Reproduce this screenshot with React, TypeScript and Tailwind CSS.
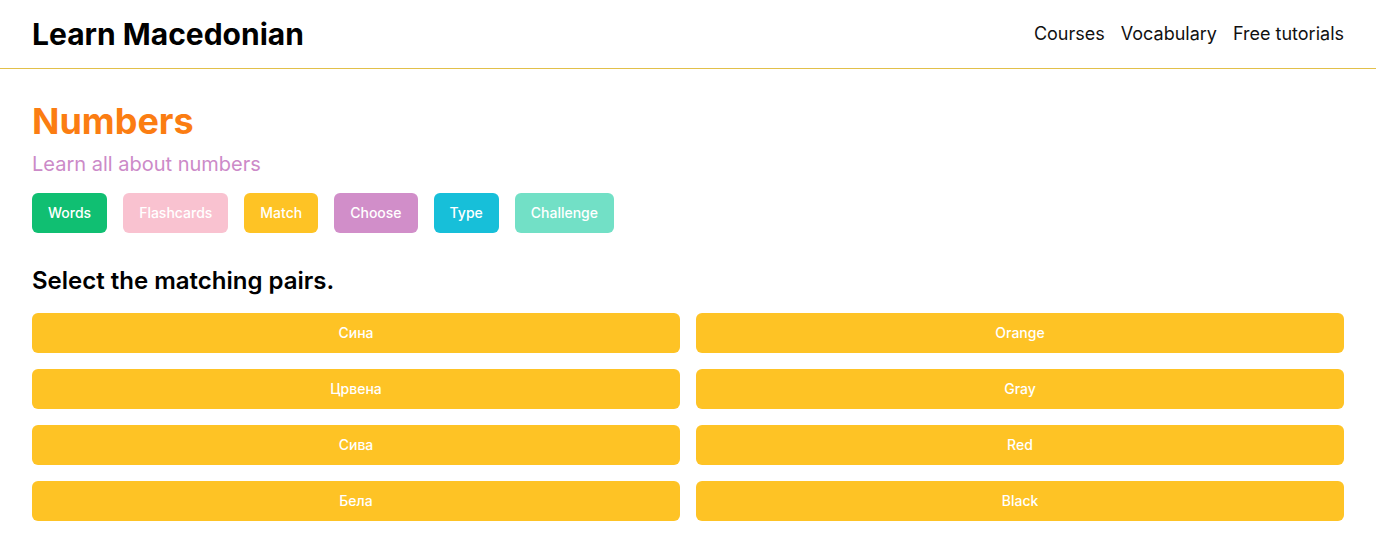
const tabs = [
  { label: "Words", cls: "bg-[#10bf72]" },
  { label: "Flashcards", cls: "bg-[#f9c2d0]" },
  { label: "Match", cls: "bg-[#fec325]" },
  { label: "Choose", cls: "bg-[#d18ec9]" },
  { label: "Type", cls: "bg-[#17bfd9]" },
  { label: "Challenge", cls: "bg-[#72e0c6]" },
];

const pairs = [
  ["Сина", "Orange"],
  ["Црвена", "Gray"],
  ["Сива", "Red"],
  ["Бела", "Black"],
];

export default function App() {
  return (
    <div className="min-h-screen bg-white font-['Inter',sans-serif] text-black">
      <header className="flex h-[69px] items-center justify-between border-b border-[#e2c04a] px-8">
        <h1 className="text-[30px] font-bold leading-none">Learn Macedonian</h1>
        <nav className="flex gap-4 text-lg text-[#111]">
          <a href="#">Courses</a>
          <a href="#">Vocabulary</a>
          <a href="#">Free tutorials</a>
        </nav>
      </header>

      <main className="px-8 pt-[30px]">
        <h2 className="text-4xl font-bold leading-[44px] text-[#fb7d12]">Numbers</h2>
        <p className="mt-[7px] text-xl text-[#cc8ac8]">Learn all about numbers</p>

        <div className="mt-[15px] flex gap-4">
          {tabs.map((t) => (
            <button
              key={t.label}
              className={`h-10 rounded-md px-4 text-sm font-medium text-white ${t.cls}`}
            >
              {t.label}
            </button>
          ))}
        </div>

        <h3 className="mt-[32px] text-2xl font-semibold leading-8">Select the matching pairs.</h3>

        <div className="mt-[16px] grid grid-cols-2 gap-4">
          {pairs.map(([mk, en]) => (
            <div key={mk} className="contents">
              <button className="h-10 rounded-md bg-[#fec325] text-sm font-medium text-white">
                {mk}
              </button>
              <button className="h-10 rounded-md bg-[#fec325] text-sm font-medium text-white">
                {en}
              </button>
            </div>
          ))}
        </div>
      </main>
    </div>
  );
}
